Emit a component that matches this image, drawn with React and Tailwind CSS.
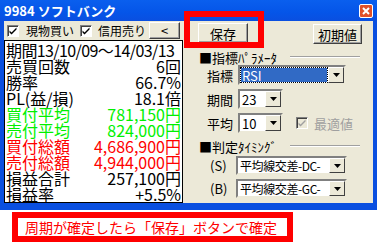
import React from 'react';

const jp = "font-['Noto_Sans_CJK_JP',sans-serif]";

const CheckBox = ({ disabled }) => (
  <span
    className={`flex h-[12px] w-[12px] shrink-0 items-center justify-center border border-t-[#808080] border-l-[#808080] border-b-white border-r-white shadow-[inset_1px_1px_0_#404040] ${
      disabled ? 'bg-[#ECE9D8]' : 'bg-white'
    }`}
  >
    <svg width="8" height="8" viewBox="0 0 8 8">
      <path d="M0.5 3.5 L2.5 5.5 L7.5 0.5 L7.5 2.5 L2.5 7.5 L0.5 5.5 Z" fill={disabled ? '#A0A0A0' : '#000'} />
    </svg>
  </span>
);

const Button = ({ children, className }) => (
  <div
    className={`flex shrink-0 items-center justify-center border border-t-white border-l-white border-b-[#404040] border-r-[#404040] bg-[#ECE9D8] shadow-[inset_-1px_-1px_0_#A0A0A0] text-[13px] leading-none text-black ${className}`}
  >
    {children}
  </div>
);

const Combo = ({ w, h, value, selected, text = 'text-[13px]' }) => (
  <div
    className={`flex ${h} ${w} shrink-0 border-2 border-t-[#808080] border-l-[#808080] border-b-[#ECE9D8] border-r-[#ECE9D8] bg-white`}
  >
    <div className="flex flex-1 items-center overflow-hidden p-[1px]">
      <span
        className={`flex h-full flex-1 items-center pl-[1px] ${text} leading-none whitespace-nowrap ${
          selected ? 'bg-[#316AC5] text-white outline-1 outline-dotted outline-[#000]' : 'text-black'
        }`}
      >
        {value}
      </span>
    </div>
    <div className="flex w-[16px] shrink-0 items-center justify-center border border-t-white border-l-white border-b-[#404040] border-r-[#404040] bg-[#ECE9D8]">
      <svg width="7" height="4" viewBox="0 0 7 4">
        <path d="M0 0 H7 L3.5 4 Z" fill="#000" />
      </svg>
    </div>
  </div>
);

const Header = ({ children }) => (
  <div className="flex h-[14px] shrink-0 items-center">
    <span className="ml-[1px] whitespace-nowrap text-[13px] leading-none">{children}</span>
    <div className="ml-[13px] mr-[2px] h-[2px] flex-1 border-t border-b border-t-[#A0A0A0] border-b-white" />
  </div>
);

const rows = [
  ['売買回数', '6回', 'text-black'],
  ['勝率', '66.7%', 'text-black'],
  ['PL(益/損)', '18.1倍', 'text-black'],
  ['買付平均', '781,150円', 'text-[#00F000]'],
  ['売付平均', '824,000円', 'text-[#00F000]'],
  ['買付総額', '4,686,900円', 'text-[#FF0000]'],
  ['売付総額', '4,944,000円', 'text-[#FF0000]'],
  ['損益合計', '257,100円', 'text-black'],
  ['損益率', '+5.5%', 'text-black'],
];

export default function App() {
  return (
    <div className={`relative h-[243px] w-[378px] overflow-hidden bg-white ${jp}`}>
      {/* window */}
      <div className="flex w-[377px] flex-col bg-[#0A4FE0] pb-[7px]">
        {/* title bar */}
        <div className="flex h-[21px] items-center justify-between bg-[linear-gradient(#0A5FEE,#0555E8_60%,#0A4FE0)] pl-[4px] pr-[4px]">
          <span className="text-[13px] font-bold leading-none text-white">9984 ソフトバンク</span>
          <div className="flex h-[14px] w-[14px] items-center justify-center rounded-[2px] border border-white bg-[#E0502A]">
            <svg width="8" height="8" viewBox="0 0 8 8">
              <path d="M1 1 L7 7 M7 1 L1 7" stroke="#fff" strokeWidth="2" />
            </svg>
          </div>
        </div>

        {/* client area */}
        <div className="mx-[4px] flex bg-[#ECE9D8]">
          {/* left */}
          <div className="flex w-[179px] flex-col">
            <div className="flex h-[19px] items-center whitespace-nowrap pl-[3px] pr-[3px] text-[12px] leading-none">
              <CheckBox />
              <span className="ml-[7px]">現物買い</span>
              <span className="ml-[6px]">
                <CheckBox />
              </span>
              <span className="ml-[6px]">信用売り</span>
              <Button className="ml-auto h-[17px] w-[31px] text-[12px]">&lt;</Button>
            </div>
            <div className="flex h-[163px] flex-col border border-black bg-white px-[1px] pt-[1px] text-[16px] leading-[16px]">
              <div className="h-[16px] shrink-0 whitespace-nowrap tracking-[-0.6px]">期間13/10/09～14/03/13</div>
              {rows.map(([label, value, color]) => (
                <div key={label} className={`flex h-[16px] shrink-0 justify-between whitespace-nowrap ${color}`}>
                  <span>{label}</span>
                  <span>{value}</span>
                </div>
              ))}
            </div>
          </div>

          {/* right */}
          <div className="flex flex-1 flex-col pl-[15px] pr-[11px] text-[13px] leading-none text-black">
            <div className="mt-[2px] flex h-[20px] shrink-0 items-start justify-between">
              <Button className="h-[20px] w-[50px]">保存</Button>
              <Button className="mt-[1px] h-[20px] w-[49px]">初期値</Button>
            </div>
            <div className="mt-[7px]">
              <Header>■指標ﾊﾟﾗﾒｰﾀ</Header>
            </div>
            <div className="mt-[1px] flex items-center">
              <span className="ml-[9px] w-[31px]">指標</span>
              <Combo w="w-[108px]" h="h-[20px]" value="RSI" selected />
            </div>
            <div className="mt-[4px] flex items-center">
              <span className="ml-[9px] w-[31px]">期間</span>
              <Combo w="w-[45px]" h="h-[20px]" value="23" />
            </div>
            <div className="mt-[4px] flex items-center">
              <span className="ml-[9px] w-[31px]">平均</span>
              <Combo w="w-[45px]" h="h-[20px]" value="10" />
              <span className="ml-[13px]">
                <CheckBox disabled />
              </span>
              <span className="ml-[6px] text-[#A0A0A0]">最適値</span>
            </div>
            <div className="mt-[6px]">
              <Header>■判定ﾀｲﾐﾝｸﾞ</Header>
            </div>
            <div className="mt-[3px] flex items-center">
              <span className="ml-[12px] w-[26px]">(S)</span>
              <Combo w="w-[111px]" h="h-[19px]" value="平均線交差-DC-" text="text-[12px] tracking-[-0.4px]" />
            </div>
            <div className="mt-[4px] flex items-center">
              <span className="ml-[12px] w-[26px]">(B)</span>
              <Combo w="w-[111px]" h="h-[19px]" value="平均線交差-GC-" text="text-[12px] tracking-[-0.4px]" />
            </div>
          </div>
        </div>
      </div>

      {/* highlight around 保存 */}
      <div className="absolute left-[184px] top-[11px] h-[37px] w-[80px] border-[6px] border-[#FF0000]" />

      {/* caption */}
      <div className="ml-[12px] mt-[2px] flex h-[30px] w-[281px] items-center border-[6px] border-[#FF0000] bg-white pl-[7px] text-[14px] leading-none whitespace-nowrap text-[#FF0000]">
        周期が確定したら「保存」ボタンで確定
      </div>
    </div>
  );
}
